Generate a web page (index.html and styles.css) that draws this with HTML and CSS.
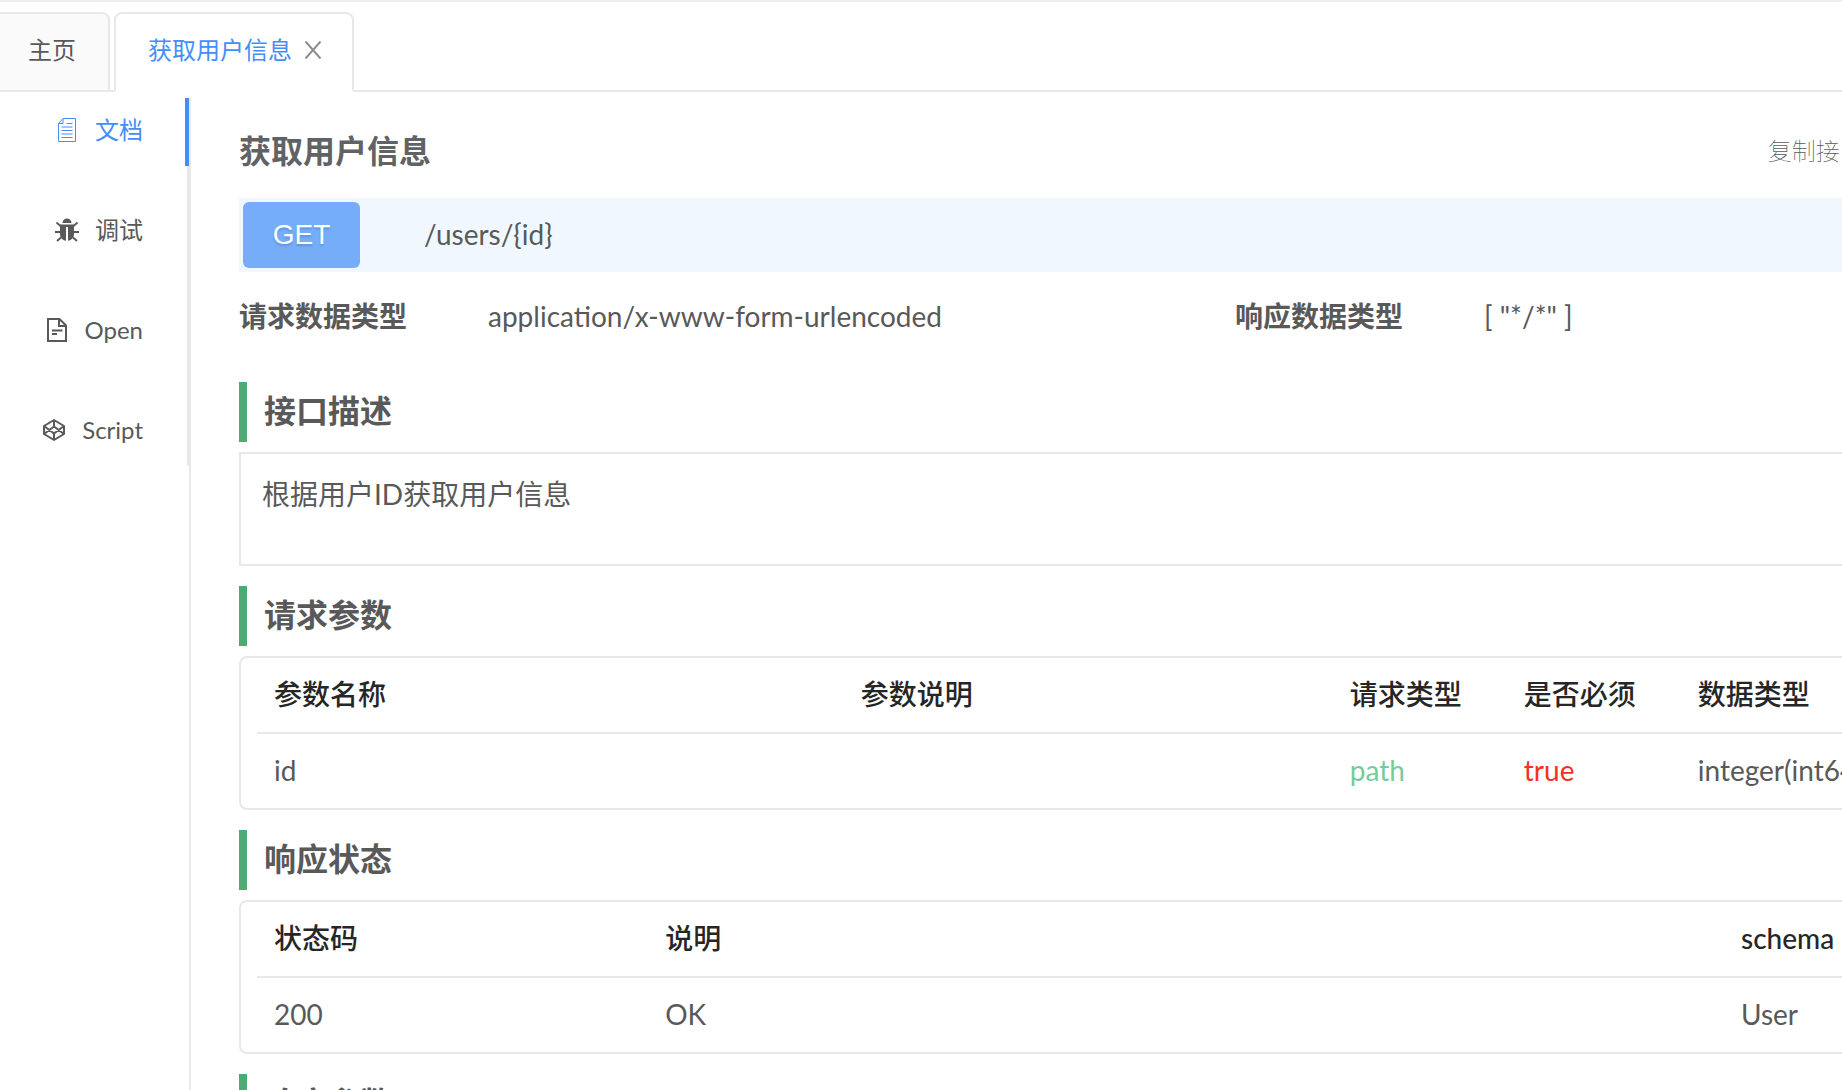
FILE: index.html
```html
<!DOCTYPE html>
<html lang="zh-CN">
<head>
<meta charset="utf-8">
<title>获取用户信息</title>
<link rel="stylesheet" href="styles.css">
</head>
<body>
<nav class="tabs">
  <button class="tab">主页</button>
  <button class="tab tab-active">获取用户信息
    <svg class="tab-close" viewBox="0 0 18 18" aria-hidden="true"><path d="M1.5 0.5 16.5 17.5M16.5 0.5 1.5 17.5"/></svg>
  </button>
</nav>
<div class="layout">
  <aside class="side">
    <ul class="menu">
      <li><a class="item item-active" href="#doc">
        <svg class="icon" viewBox="0 0 24 24" fill="none" stroke="currentColor" stroke-width="1"><path d="M8 .5H20.5V23.5H3.500V5.500L8 .5V5.500H3.500"/><path d="M11.500 5.500H17.500M6.500 9H17.500M6.500 12.500H17.500M6.500 16H17.500M6.500 19.500H17.500"/></svg>
        文档</a></li>
      <li><a class="item" href="#debug">
        <svg class="icon" viewBox="0 0 24 24" fill="currentColor"><path d="M7.500 5a4.500 4.500 0 0 1 9 0zM5 6.500h14V16c0 4-3 6.500-6 6.800V9h-2v13.800C8 22.500 5 20 5 16z"/><path d="M1.500 4.500 5.500 8M22.500 4.500 18.500 8M0 14H5.500M18.500 14H24M2 23 6 19.500M22 23 18 19.500" fill="none" stroke="currentColor" stroke-width="1.800"/></svg>
        调试</a></li>
      <li><a class="item" href="#open">
        <svg class="icon" viewBox="0 0 24 24" fill="none" stroke="currentColor" stroke-width="2"><path d="M3 1H14.500L21 7.500V23H3V0M14 1V8H21M7 12.500H17.500M7 16H12"/></svg>
        Open</a></li>
      <li><a class="item" href="#script">
        <svg class="icon" viewBox="0 0 24 24" fill="none" stroke="currentColor" stroke-width="2" stroke-linejoin="round"><path d="M12 2 22 8V16L12 22 2 16V8ZM12 2V8.500M12 15.500V22M2 8 12 15.500 22 8M2 16 12 8.500 22 16"/></svg>
        Script</a></li>
    </ul>
  </aside>
  <main class="doc" id="doc">
    <header class="doc-head">
      <h1 class="title">获取用户信息</h1>
      <a class="copy" href="#copy">复制接口</a>
    </header>
    <div class="endpoint">
      <button class="method">GET</button>
      <span class="path">/users/{id}</span>
    </div>
    <dl class="types">
      <dt>请求数据类型</dt><dd>application/x-www-form-urlencoded</dd>
      <dt>响应数据类型</dt><dd>[ "*/*" ]</dd>
    </dl>
    <h2 class="section">接口描述</h2>
    <p class="description">根据用户ID获取用户信息</p>
    <h2 class="section">请求参数</h2>
    <div class="card">
      <table class="grid">
        <colgroup><col class="w30"><col class="w25"><col class="w9"><col class="w9"><col></colgroup>
        <thead><tr><th>参数名称</th><th>参数说明</th><th>请求类型</th><th>是否必须</th><th>数据类型</th></tr></thead>
        <tbody><tr><td>id</td><td></td><td class="in-path">path</td><td class="required">true</td><td>integer(int64)</td></tr></tbody>
      </table>
    </div>
    <h2 class="section">响应状态</h2>
    <div class="card">
      <table class="grid">
        <colgroup><col class="w20"><col class="w55"><col></colgroup>
        <thead><tr><th>状态码</th><th>说明</th><th>schema</th></tr></thead>
        <tbody><tr><td>200</td><td>OK</td><td>User</td></tr></tbody>
      </table>
    </div>
    <h2 class="section">响应参数</h2>
  </main>
</div>
</body>
</html>
```
FILE: styles.css
```css
* { box-sizing: border-box; }
html { height: 100%; }
body {
  display: flex;
  flex-direction: column;
  height: 100%;
  margin: 0;
  overflow: hidden;
  border-top: 2px solid #ebeef2;
  background: #fff;
  color: #595959;
  font: 28px/42px Lato, "Noto Sans CJK SC", sans-serif;
}
h1, h2, p, ul, dl, dd { margin: 0; padding: 0; }
button { border: 0; font: inherit; cursor: pointer; }
a { color: inherit; text-decoration: none; }

.tabs {
  display: flex;
  flex: none;
  gap: 4px;
  padding-top: 10px;
  box-shadow: inset 0 -2px #e8e8e8;
}
.tab {
  display: flex;
  align-items: center;
  gap: 12px;
  height: 80px;
  padding: 0 32px 4px 28px;
  border: 2px solid #e8e8e8;
  border-left-width: 0;
  border-radius: 0 8px 0 0;
  background: #fafafa;
  color: #595959;
  font-size: 24px;
}
.tab-active {
  padding: 0 30px 4px 32px;
  border-left-width: 2px;
  border-bottom-color: #fff;
  border-radius: 8px 8px 0 0;
  background: #fff;
  color: #448ef7;
}
.tab-close { width: 18px; height: 18px; fill: none; stroke: #8c8c8c; stroke-width: 2; }

.layout { display: flex; flex: 1; min-height: 0; }
.side {
  flex: none;
  width: 191px;
  margin-top: 6px;
  border-right: 2px solid #e8e8e8;
}
.menu { border-right: 2px solid #e8e8e8; list-style: none; }
.menu li { height: 100px; }
.menu li:last-child { height: 68px; }
.item {
  display: flex;
  align-items: center;
  justify-content: flex-end;
  gap: 16px;
  height: 68px;
  padding: 0 44px 4px 0;
  font-size: 24px;
}
.item-active {
  position: relative;
  color: #448ef7;
}
.item-active::after {
  content: "";
  position: absolute;
  top: 0;
  right: -2px;
  width: 4px;
  height: 100%;
  background: #448ef7;
}
.icon { width: 24px; height: 24px; }

.doc { flex: 1 0 0; min-width: 1992px; margin-left: 48px; }
.doc-head {
  display: grid;
  grid-template-columns: 33fr 10fr;
  align-items: center;
  height: 106px;
  padding-top: 12px;
}
.title { color: #606266; font-size: 32px; font-weight: 700; }
.copy { font-size: 24px; font-weight: 100; }
.endpoint {
  display: flex;
  align-items: center;
  gap: 64px;
  padding: 4px;
  background: #f0f7ff;
}
.path { padding-bottom: 2px; }
.method {
  width: 117px;
  height: 66px;
  border-radius: 6px;
  background: #75adf9;
  color: #fff;
  font-family: "Liberation Sans", sans-serif;
  text-shadow: 0 2px 2px rgba(0, 0, 0, .15);
}
.types {
  display: grid;
  grid-template-columns: 1fr 3fr 1fr 3fr;
  padding: 23px 0 45px;
}
.types dt { font-weight: 700; }
.section {
  height: 60px;
  padding-left: 17px;
  border-left: 8px solid #4caa75;
  font-size: 32px;
  font-weight: 700;
  line-height: 58px;
}
.description {
  height: 114px;
  margin: 10px 0 20px;
  padding: 19px 21px;
  border: 2px solid #e8e8e8;
}
.card {
  margin: 10px 0 20px;
  padding: 0 16px;
  border: 2px solid #e8e8e8;
  border-radius: 8px;
}
.grid { width: 100%; border-collapse: separate; border-spacing: 0; table-layout: fixed; }
.grid th, .grid td { height: 74px; padding: 0 17px 2px; text-align: left; }
.grid th { height: 76px; border-bottom: 2px solid #e8e8e8; color: #262626; font-weight: 500; }
.grid .in-path { color: #76cc99; }
.grid .required { color: #f5311f; }
.w9 { width: 174px; }
.w20 { width: 20%; }
.w25 { width: 25%; }
.w30 { width: 30%; }
.w55 { width: 55%; }
```
